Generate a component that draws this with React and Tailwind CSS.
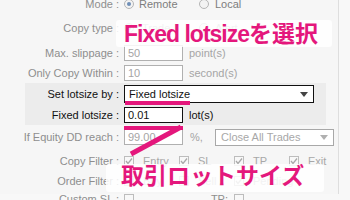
import React from 'react';

const PINK = 'bg-[#e4177c]';

const Row = ({ label, dark, h, lw = 119, children }) => (
	<div className={`flex items-center ${h}`}>
		<div className={`shrink-0 text-right whitespace-nowrap ${lw === 119 ? 'w-[119px]' : 'w-[94px]'} ${dark ? 'text-[#111]' : 'text-[#8e8e8e]'}`}>
			{label}
		</div>
		<div className="ml-[5px] flex items-center">{children}</div>
	</div>
);

const Radio = ({ on }) => (
	<span className="w-[10px] h-[10px] rounded-full border border-[#b5b5b5] bg-[#f3f3f3] flex items-center justify-center shrink-0">
		{on && <span className="w-[4px] h-[4px] rounded-full bg-[#6f8fb8]" />}
	</span>
);

const Check = ({ on = true }) => (
	<span className="w-[10px] h-[10px] border border-[#bdbdbd] bg-[#f8f8f8] flex items-center justify-center shrink-0">
		{on && (
			<svg width="8" height="8" viewBox="0 0 8 8">
				<path d="M1 4 L3 6.5 L7 1.5" stroke="#a9a9a9" strokeWidth="1.3" fill="none" />
			</svg>
		)}
	</span>
);

const Cell = ({ label, on }) => (
	<div className="w-[55px] flex items-center gap-[9px] text-[#a8a8a8]">
		<Check on={on} />
		<span>{label}</span>
	</div>
);

const Input = ({ value, dark }) => (
	<div className={`w-[59px] h-[16px] border bg-white px-[3px] leading-[14px] ${dark ? 'border-[#111] text-[#111]' : 'border-[#b0b0b0] text-[#a5a5a5]'}`}>
		{value}
	</div>
);

const Arrow = ({ dark }) => (
	<svg width="8" height="5" viewBox="0 0 8 5">
		<path d="M0 0 H8 L4 5 Z" fill={dark ? '#444' : '#b0b0b0'} />
	</svg>
);

export default function App() {
	return (
		<div className="relative w-[350px] h-[200px] overflow-hidden bg-[#f8f8f8] text-[11px] font-['Liberation_Sans',Arial,sans-serif]">
			<div className="w-[339px] h-full border-r border-[#dedede] bg-[#f6f6f6]">
				<div className="-mt-[6px] flex flex-col">
					<Row label="Mode :" h="h-[20px]">
						<div className="flex items-center gap-[5px] w-[75px] text-[#7d7d7d]">
							<Radio on />
							<span>Remote</span>
						</div>
						<div className="flex items-center gap-[6px] text-[#7d7d7d]">
							<Radio />
							<span>Local</span>
						</div>
					</Row>
					<Row label="Copy type :" h="h-[28px]">
						<div className="flex items-center gap-[8px] w-[75px] text-[#aaa]">
							<Radio on />
							<span>Trade</span>
						</div>
						<div className="flex items-center gap-[6px] text-[#aaa]">
							<Radio />
							<span>Alert</span>
						</div>
					</Row>
					<Row label="Max. slippage :" h="h-[22px]">
						<Input value="50" />
						<span className="ml-[6px] text-[#a5a5a5]">point(s)</span>
					</Row>
					<Row label="Only Copy Within :" h="h-[18px]">
						<Input value="10" />
						<span className="ml-[6px] text-[#a5a5a5]">second(s)</span>
					</Row>
					<div className="ml-[25px] w-[301px] bg-[#ececec] mt-[1px]">
						<Row label="Set lotsize by :" dark lw={94} h="h-[22px]">
							<div className="w-[190px] h-[18px] border border-[#111] bg-white flex items-center justify-between pl-[4px] pr-[5px] text-[#111]">
								<span>Fixed lotsize</span>
								<Arrow dark />
							</div>
						</Row>
						<Row label="Fixed lotsize :" dark lw={94} h="h-[20px]">
							<Input value="0.01" dark />
							<span className="ml-[6px] text-[#111]">lot(s)</span>
						</Row>
					</div>
					<Row label="If Equity DD reach :" h="h-[24px]">
						<Input value="99.00" />
						<span className="ml-[7px] w-[25px] text-[#a5a5a5]">%,</span>
						<div className="w-[119px] h-[17px] border border-[#a8a8a8] bg-white flex items-center justify-between pl-[5px] pr-[5px] text-[#a8a8a8]">
							<span>Close All Trades</span>
							<Arrow />
						</div>
					</Row>
					<Row label="Copy Filter :" h="h-[24px]">
						<Cell label="Entry" on />
						<Cell label="SL" on />
						<Cell label="TP" on />
						<Cell label="Exit" on />
					</Row>
					<Row label="Order Filter :" h="h-[16px]">
						<Cell label="Buy" on />
						<Cell label="Sell" on />
						<Cell label="Pending" on />
					</Row>
					<Row label="Custom SL :" h="h-[20px]">
						<div className="w-[55px]"><Check on={false} /></div>
						<div className="w-[55px] text-right pr-[6px] text-[#8e8e8e]">TP:</div>
						<Check on={false} />
					</Row>
				</div>
			</div>

			{/* annotations */}
			<div className="absolute left-[116px] top-[20px] w-[216px] h-[27px] bg-white/85 rounded-[3px]" />
			<div className="absolute left-[124px] top-[21px] leading-[26px] text-[23px] font-bold text-[#e4177c] whitespace-nowrap font-['Liberation_Sans','Noto_Sans_CJK_JP',sans-serif]">
				<span className="tracking-[-1px]">Fixed lotsize</span>を選択
			</div>
			<div className={`absolute left-[125px] top-[101px] w-[65px] h-[4px] ${PINK}`} />
			<div className={`absolute left-[124px] top-[126px] w-[59px] h-[4px] ${PINK}`} />
			<svg className="absolute left-0 top-0" width="350" height="200">
				<line x1="181" y1="127" x2="131" y2="154" stroke="#e4177c" strokeWidth="5" />
			</svg>
			<div className="absolute left-[106px] top-[164px] w-[218px] h-[28px] bg-white/85 rounded-[3px]" />
			<div className="absolute left-[121px] top-[161px] leading-[26px] text-[23px] font-bold text-[#e4177c] whitespace-nowrap font-['Noto_Sans_CJK_JP',sans-serif]">
				取引ロットサイズ
			</div>
		</div>
	);
}
